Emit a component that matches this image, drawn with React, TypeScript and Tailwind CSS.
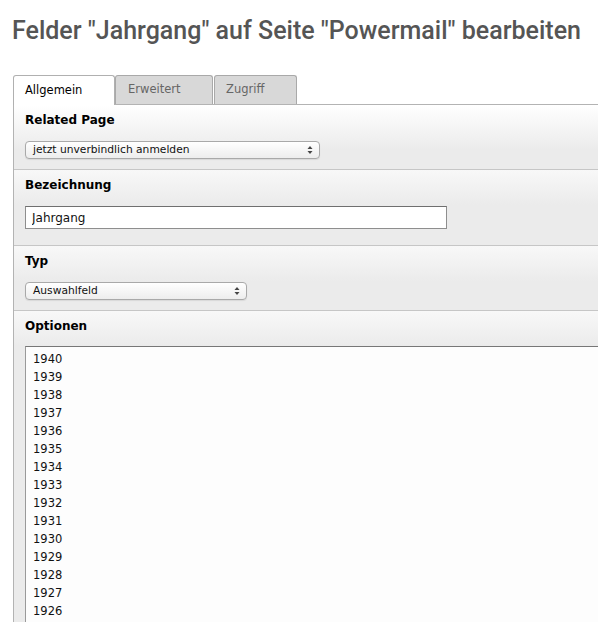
import { ReactNode } from "react";

const years = Array.from({ length: 15 }, (_, i) => String(1940 - i));

const SelectBox = ({ value, width }: { value: string; width: string }) => {
  return (
    <div
      className={`${width} h-[18px] flex items-center justify-between rounded-[4px] border border-[#a9a9a9] bg-[linear-gradient(#ffffff,#ededed)] shadow-[0_1px_1px_rgba(0,0,0,0.08)] pl-[7px] pr-[6px]`}
    >
      <span className="text-[10.7px] leading-none text-[#111]">{value}</span>
      <svg width="6" height="10" viewBox="0 0 6 10" className="text-[#444]">
        <path d="M3 1 L5.5 4 L0.5 4 Z" fill="currentColor" />
        <path d="M3 9 L5.5 6 L0.5 6 Z" fill="currentColor" />
      </svg>
    </div>
  );
};

const Section = ({ label, children, bottom = "pb-[10px]", first = false }: { label: string; children: ReactNode; bottom?: string; first?: boolean }) => {
  return (
    <div
      className={`flex flex-col pl-[11px] pt-[6px] ${bottom} border-b border-[#c6c6c6] ${first ? "bg-[linear-gradient(#ffffff,#ebebeb_45px)]" : "bg-[linear-gradient(#f8f8f8,#ebebeb_35px)]"}`}
    >
      <p className="h-[18px] leading-[18px] text-[12px] font-bold text-black">{label}</p>
      <div className="mt-[12px]">{children}</div>
    </div>
  );
};

export default function App() {
  return (
    <div className="w-[598px] h-[622px] overflow-hidden bg-white" style={{ fontFamily: "'DejaVu Sans', Verdana, sans-serif" }}>
      <div className="w-[720px]">
        <div className="h-[75px] pl-[12px] pt-[14px]">
          <h1
            className="text-[25px] leading-[34px] font-medium text-[#555]"
            style={{ fontFamily: "Roboto, 'Liberation Sans', sans-serif" }}
          >
            Felder "Jahrgang" auf Seite "Powermail" bearbeiten
          </h1>
        </div>

        <div className="flex items-end ml-[13px]">
          <div className="w-[102px] h-[30px] border-l border-t border-r border-[#b0b0b0] rounded-t-[3px] bg-white pl-[11px] flex items-center text-[11.5px] text-black">
            Allgemein
          </div>
          <div className="flex flex-1 items-end border-b border-[#b3b3b3]">
            <div className="w-[98px] h-[29px] border-l border-t border-r border-[#a9a9a9] rounded-t-[3px] bg-[#d8d8d8] pl-[12px] flex items-center text-[11.5px] text-[#666]">
              Erweitert
            </div>
            <div className="ml-px w-[83px] h-[29px] border-l border-t border-r border-[#a9a9a9] rounded-t-[3px] bg-[#d8d8d8] pl-[11px] flex items-center text-[11.5px] text-[#666]">
              Zugriff
            </div>
          </div>
        </div>

        <div className="ml-[13px] border-l border-[#b3b3b3] bg-[#ebebeb] h-[600px]">
          <Section label="Related Page" first>
            <SelectBox value="jetzt unverbindlich anmelden" width="w-[295px]" />
          </Section>
          <Section label="Bezeichnung" bottom="pb-[16px]">
            <input
              readOnly
              value="Jahrgang"
              className="block w-[422px] h-[23px] border border-[#8e8e8e] border-t-[#6f6f6f] bg-white pl-[6px] text-[12px] text-[#111] outline-none"
            />
          </Section>
          <Section label="Typ">
            <SelectBox value="Auswahlfeld" width="w-[222px]" />
          </Section>
          <div className="flex flex-col pl-[11px] pt-[6px] bg-[linear-gradient(#f8f8f8,#ebebeb_35px)]">
            <p className="h-[18px] leading-[18px] text-[12px] font-bold text-black">Optionen</p>
            <div className="mt-[11px] h-[400px] border border-[#9a9a9a] border-t-[#777] bg-[#fdfdfd] pl-[7px] pt-[3px]">
              {years.map((y) => (
                <div key={y} className="h-[18px] leading-[18px] text-[11.5px] text-[#111]">
                  {y}
                </div>
              ))}
            </div>
          </div>
        </div>
      </div>
    </div>
  );
}
